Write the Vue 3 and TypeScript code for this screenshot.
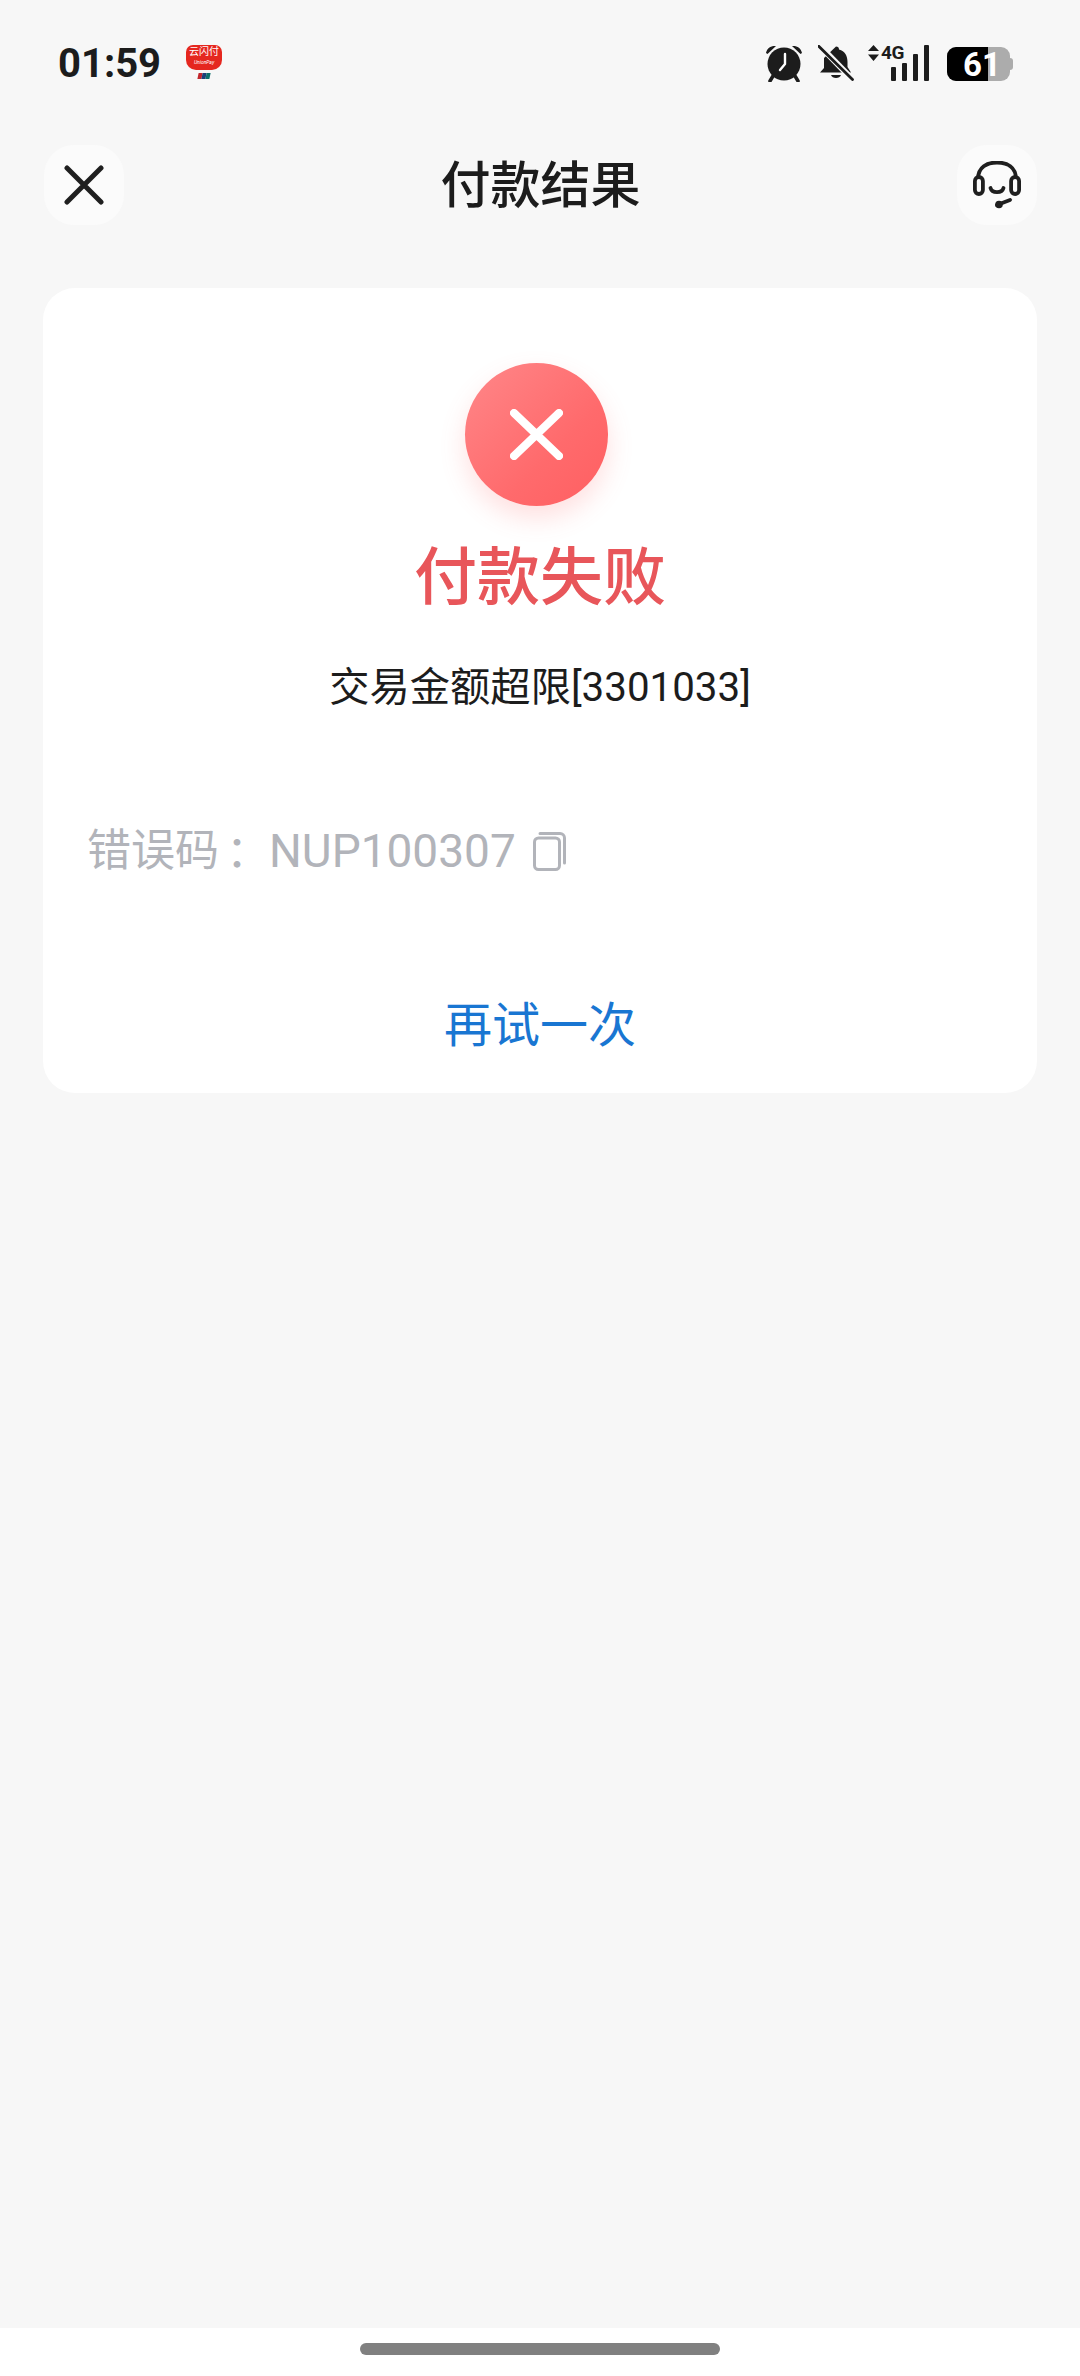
<template>
  <div class="page">
    <div class="status-bar">
      <div class="status-left">
        <span class="clock">01:59</span>
        <div class="app-badge">
          <div class="badge-red">
            <span class="badge-cn">云闪付</span>
            <span class="badge-en">UnionPay</span>
          </div>
          <div class="badge-tail"><i class="t1"></i><i class="t2"></i><i class="t3"></i></div>
        </div>
      </div>
      <div class="status-right">
        <svg class="ic-alarm" width="38" height="38" viewBox="0 0 38 38">
          <circle cx="19" cy="20" r="16.5" fill="#1c1c1c" />
          <path d="M1 9 C2 4 6 1.500 11 2 L2.500 10 Z M37 9 C36 4 32 1.500 27 2 L35.500 10 Z" fill="#1c1c1c" />
          <path d="M8 32 L5 37 M30 32 L33 37" stroke="#1c1c1c" stroke-width="3.500" stroke-linecap="round" />
          <path d="M20 10 V20 L15 26" fill="none" stroke="#fff" stroke-width="2.400" stroke-linecap="round" stroke-linejoin="round" />
        </svg>
        <svg class="ic-bell" width="36" height="36" viewBox="0 0 36 36">
          <path d="M18 1.500 a3 3 0 0 1 3 3 C27 6 29.500 11 29.500 17 V22 L33 27.500 H2 L6 23 V13 Z" fill="#1c1c1c" />
          <path d="M13 30 H23 C22 34 14 34 13 30 Z" fill="#1c1c1c" />
          <path d="M1 0 L34 34" stroke="#f7f7f7" stroke-width="6" />
          <path d="M0.500 1 L34.500 34.500" stroke="#1c1c1c" stroke-width="2.800" stroke-linecap="round" />
        </svg>
        <div class="signal">
          <svg class="ic-arrows" width="11" height="16" viewBox="0 0 11 16">
            <path d="M5.500 0 L11 6 H0 Z M5.500 16 L11 9.500 H0 Z" fill="#1c1c1c" />
          </svg>
          <span class="net">4G</span>
          <div class="bars">
            <i class="bar b1"></i><i class="bar b2"></i><i class="bar b3"></i><i class="bar b4"></i>
          </div>
        </div>
        <div class="battery">
          <div class="battery-fill"></div>
          <span class="battery-text">61</span>
          <div class="battery-nub"></div>
        </div>
      </div>
    </div>

    <div class="nav">
      <button class="nav-btn">
        <svg width="40" height="40" viewBox="0 0 40 40">
          <path d="M3 3 L37 37 M37 3 L3 37" stroke="#1f1f1f" stroke-width="5" stroke-linecap="round" />
        </svg>
      </button>
      <span class="nav-title">付款结果</span>
      <button class="nav-btn">
        <svg width="48" height="48" viewBox="0 0 48 48">
          <path d="M5 18 C5 6 14 1.500 24 1.500 C34 1.500 43 6 43 18" fill="none" stroke="#1f1f1f" stroke-width="3.800" />
          <rect x="1.900" y="16" width="8" height="17" rx="4" fill="none" stroke="#1f1f1f" stroke-width="3.800" />
          <rect x="38.100" y="16" width="8" height="17" rx="4" fill="none" stroke="#1f1f1f" stroke-width="3.800" />
          <path d="M17.500 27 C19 32.500 29 32.500 30.500 27" fill="none" stroke="#1f1f1f" stroke-width="3.800" stroke-linecap="round" />
          <path d="M24 44 L37 39" fill="none" stroke="#1f1f1f" stroke-width="3.800" stroke-linecap="round" />
          <circle cx="26" cy="43.500" r="3.800" fill="#1f1f1f" />
        </svg>
      </button>
    </div>

    <div class="card">
      <div class="fail-icon">
        <svg width="53" height="51" viewBox="0 0 53 51">
          <path d="M4 4 L49 47 M49 4 L4 47" stroke="#fff" stroke-width="8" stroke-linecap="round" />
        </svg>
      </div>
      <div class="fail-title">付款失败</div>
      <div class="fail-msg">交易金额超限[3301033]</div>
      <div class="err-row">
        <span class="err-label">错误码</span>
        <span class="err-colon">：</span>
        <span class="err-code">NUP100307</span>
        <svg class="ic-copy" width="33" height="39" viewBox="0 0 33 39">
          <rect x="1.500" y="6" width="25" height="31.500" rx="4" fill="none" stroke="#b2b4ba" stroke-width="3" />
          <path d="M7 1.500 H27 a4.500 4.500 0 0 1 4.500 4.500 V31" fill="none" stroke="#b2b4ba" stroke-width="3" stroke-linecap="round" />
        </svg>
      </div>
      <div class="retry">再试一次</div>
    </div>

    <div class="home-area">
      <div class="home-handle"></div>
    </div>
  </div>
</template>

<script setup lang="ts">
</script>

<style>
html,
body {
  margin: 0;
  background: #f7f7f7;
}
</style>

<style scoped>
.page {
  width: 1080px;
  height: 2376px;
  display: flex;
  flex-direction: column;
  background: #f7f7f7;
  font-family: Roboto, "Noto Sans CJK SC", sans-serif;
  overflow: hidden;
}

.status-bar {
  height: 126px;
  display: flex;
  align-items: center;
  justify-content: space-between;
  padding: 0 70px 0 58px;
  flex-shrink: 0;
}

.status-left {
  display: flex;
  align-items: center;
  gap: 24px;
}

.clock {
  font-size: 40px;
  font-weight: 700;
  color: #1c1c1c;
}

.app-badge {
  width: 38px;
  height: 40px;
  margin-top: 4px;
  display: flex;
  flex-direction: column;
  align-items: center;
}

.badge-red {
  width: 36px;
  height: 25px;
  background: #e5271f;
  border-radius: 7px 7px 10px 10px;
  display: flex;
  flex-direction: column;
  align-items: center;
  color: #fff;
  overflow: hidden;
}

.badge-cn {
  font-size: 10px;
  line-height: 14px;
  white-space: nowrap;
}

.badge-en {
  font-size: 5px;
  line-height: 7px;
  font-style: italic;
}

.badge-tail {
  display: flex;
  margin-top: 3px;
  transform: skewX(-12deg);
}

.badge-tail i {
  width: 4px;
  height: 6px;
  display: block;
}

.t1 {
  background: #c2272d;
}

.t2 {
  background: #1c3f78;
}

.t3 {
  background: #0d6f6c;
}

.status-right {
  display: flex;
  align-items: center;
}

.ic-alarm {
  margin-right: 15px;
}

.ic-bell {
  margin-right: 14px;
}

.signal {
  position: relative;
  width: 61px;
  height: 36px;
  margin-right: 18px;
}

.ic-arrows {
  position: absolute;
  left: 0;
  top: 0;
}

.net {
  position: absolute;
  left: 13px;
  top: -5px;
  font-size: 19px;
  line-height: 26px;
  font-weight: 700;
  color: #1c1c1c;
  letter-spacing: -0.5px;
}

.bars {
  position: absolute;
  right: 0;
  bottom: 0;
  display: flex;
  align-items: flex-end;
  gap: 5.500px;
}

.bar {
  width: 5.500px;
  display: block;
  background: #1c1c1c;
  border-radius: 1px;
}

.b1 {
  height: 14px;
}

.b2 {
  height: 18px;
}

.b3 {
  height: 27px;
}

.b4 {
  height: 36px;
}

.battery {
  position: relative;
  width: 63px;
  height: 34px;
  background: #acacac;
  border-radius: 9px;
  margin-top: 2px;
}

.battery-fill {
  width: 41px;
  height: 34px;
  background: #000;
  border-radius: 9px 0 0 9px;
}

.battery-text {
  position: absolute;
  left: 16px;
  top: 0;
  font-size: 33px;
  line-height: 35px;
  font-weight: 700;
  color: #fff;
}

.battery-nub {
  position: absolute;
  right: -3px;
  top: 11px;
  width: 3px;
  height: 12px;
  background: #acacac;
  border-radius: 0 3px 3px 0;
}

.nav {
  margin-top: 19px;
  height: 80px;
  padding: 0 43px 0 44px;
  display: flex;
  align-items: center;
  justify-content: space-between;
  flex-shrink: 0;
}

.nav-btn {
  width: 80px;
  height: 80px;
  padding: 0;
  border: none;
  border-radius: 30px;
  background: #fbfbfb;
  display: flex;
  align-items: center;
  justify-content: center;
}

.nav-title {
  font-size: 50px;
  line-height: 72px;
  padding-top: 1px;
  font-weight: 500;
  color: #1c1c1c;
}

.card {
  margin: 63px 43px 0;
  height: 805px;
  box-sizing: border-box;
  padding-top: 75px;
  background: #fff;
  border-radius: 32px;
  display: flex;
  flex-direction: column;
  align-items: center;
  flex-shrink: 0;
}

.fail-icon {
  width: 143px;
  height: 143px;
  margin-left: -7px;
  border-radius: 50%;
  background: linear-gradient(135deg, #ff8789 0%, #ff6a6c 62%, #ff5f61 100%);
  box-shadow: 0 12px 26px rgba(255, 100, 100, 0.2);
  display: flex;
  align-items: center;
  justify-content: center;
}

.fail-title {
  margin-top: 30px;
  font-size: 63px;
  line-height: 84px;
  font-weight: 500;
  color: #e8565a;
}

.fail-msg {
  margin-top: 40px;
  font-size: 40.300px;
  line-height: 56px;
  color: #1c1c1c;
}

.err-row {
  align-self: flex-start;
  margin-top: 104px;
  margin-left: 44px;
  display: flex;
  align-items: center;
  font-size: 44px;
  line-height: 62px;
  color: #b2b4ba;
}

.err-colon {
  font-family: "Noto Sans CJK TC", sans-serif;
  margin-left: -4px;
}

.err-code {
  margin-left: 10px;
  font-size: 46px;
}

.ic-copy {
  margin-left: 17px;
}

.retry {
  margin-top: 111px;
  font-size: 48px;
  line-height: 66px;
  color: #1976d2;
}

.home-area {
  margin-top: auto;
  height: 48px;
  background: #fff;
  display: flex;
  justify-content: center;
  padding-top: 15px;
  box-sizing: border-box;
  flex-shrink: 0;
}

.home-handle {
  width: 360px;
  height: 12px;
  border-radius: 6px;
  background: #808080;
}
</style>
